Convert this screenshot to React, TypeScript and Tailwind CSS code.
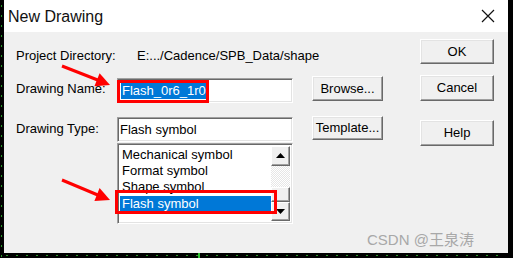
import React from 'react';

const font = { fontFamily: '"Liberation Sans", Arial, sans-serif' };

// classic raised 3D button
function Btn({ label, className = '' }: { label: string; className?: string }) {
  return (
    <div
      className={`flex items-center justify-center bg-[#f0f0f0] border border-t-white border-l-white border-r-[#696969] border-b-[#696969] shadow-[inset_-1px_-1px_0_#a0a0a0,inset_1px_1px_0_#e3e3e3] text-[13px] text-black ${className}`}
    >
      {label}
    </div>
  );
}

function Field({ children }: { children?: React.ReactNode }) {
  return (
    <div className="h-[25px] w-[176px] shrink-0 bg-white border border-t-[#a0a0a0] border-l-[#a0a0a0] border-r-white border-b-white shadow-[inset_1px_1px_0_#696969,inset_-1px_-1px_0_#e3e3e3] flex items-center pl-[2px] text-[13px] text-black">
      {children}
    </div>
  );
}

function ScrollBtn({ up, className = '' }: { up?: boolean; className?: string }) {
  return (
    <div
      className={`flex items-center justify-center bg-[#f0f0f0] border border-t-white border-l-white border-r-[#696969] border-b-[#696969] shadow-[inset_-1px_-1px_0_#a0a0a0] ${className}`}
    >
      <svg width="9" height="5" viewBox="0 0 9 5">
        {up ? <polygon points="4.5,0 9,5 0,5" fill="#000" /> : <polygon points="0,0 9,0 4.5,5" fill="#000" />}
      </svg>
    </div>
  );
}

export default function App() {
  const items = ['Mechanical symbol', 'Format symbol', 'Shape symbol'];

  return (
    <div className="relative w-[513px] h-[258px] bg-black overflow-hidden" style={font}>
      <div className="flex w-full h-full">
        {/* green dotted strip on the left */}
        <div className="w-[4px] h-full shrink-0" />
        <div className="flex flex-col w-[504px] h-[253px] shrink-0">
          {/* Title bar */}
          <div className="h-[32px] bg-white flex items-center justify-between pl-[4px] pr-[13px]">
            <span className="text-[16px] text-[#111] mt-[1px]">New Drawing</span>
            <svg width="14" height="14" viewBox="0 0 14 14" className="mb-[1px]">
              <path d="M1 1 L13 13 M13 1 L1 13" stroke="#111" strokeWidth="1.2" />
            </svg>
          </div>

          {/* Body */}
          <div className="flex-1 bg-[#f0f0f0] flex pl-[12px] text-[13px] text-black">
            {/* labels + fields */}
            <div className="flex flex-col w-[277px] shrink-0">
              <div className="mt-[15px] h-[17px] flex items-center whitespace-nowrap">
                <span className="w-[121px] shrink-0">Project Directory:</span>
                <span className="shrink-0">E:.../Cadence/SPB_Data/shape</span>
              </div>
              <div className="mt-[14px] flex items-center">
                <span className="w-[101px] shrink-0 whitespace-nowrap -mt-[4px]">Drawing Name:</span>
                <Field>
                  <span className="bg-[#0078d7] text-white px-[1px] leading-[17px] ml-[1px]">Flash_0r6_1r0</span>
                </Field>
              </div>
              <div className="mt-[14px] flex items-center">
                <span className="w-[101px] shrink-0 whitespace-nowrap -mt-[2px]">Drawing Type:</span>
                <Field>Flash symbol</Field>
              </div>
              <div className="mt-[1px] ml-[101px] relative w-[176px] h-[81px] bg-white border border-t-[#a0a0a0] border-l-[#a0a0a0] border-r-white border-b-white shadow-[inset_1px_1px_0_#696969,inset_-1px_-1px_0_#e3e3e3] flex p-[2px]">
                <div className="flex-1 flex flex-col pt-[1px]">
                  {items.map((t) => (
                    <div key={t} className="h-[16px] leading-[16px] pl-[2px]">
                      {t}
                    </div>
                  ))}
                  <div className="h-[16px] leading-[16px] pl-[2px] bg-[#0078d7] text-white mt-[1px]">Flash symbol</div>
                </div>
                <div className="w-[19px] flex flex-col">
                  <ScrollBtn up className="h-[20px]" />
                  <div className="h-[22px] bg-[repeating-conic-gradient(#ffffff_0_25%,#e6e6e6_0_50%)] bg-[length:2px_2px]" />
                  <div className="h-[15px] bg-[#f0f0f0] border border-t-white border-l-white border-r-[#696969] border-b-[#696969] shadow-[inset_-1px_-1px_0_#a0a0a0]" />
                  <ScrollBtn className="h-[19px]" />
                </div>
                {/* red highlight around selected item */}
                <div className="absolute left-[-3px] top-[46px] w-[162px] h-[24px] border-[3px] border-[#ff0000]" />
              </div>
            </div>

            {/* middle button column */}
            <div className="flex flex-col ml-[19px] w-[71px] shrink-0">
              <Btn label="Browse..." className="mt-[44px] h-[25px]" />
              <Btn label="Template..." className="mt-[15px] h-[24px]" />
            </div>

            {/* right button column */}
            <div className="flex flex-col ml-[37px] w-[74px] shrink-0">
              <Btn label="OK" className="mt-[7px] h-[25px]" />
              <Btn label="Cancel" className="mt-[11px] h-[26px]" />
              <Btn label="Help" className="mt-[19px] h-[26px]" />
            </div>
          </div>
        </div>
      </div>

      {/* red box around drawing name */}
      <div className="absolute left-[117px] top-[80px] w-[92px] h-[23px] border-[3px] border-[#ff0000]" />

      {/* red arrows */}
      <svg className="absolute left-0 top-0" width="513" height="258" viewBox="0 0 513 258">
        <line x1="62" y1="66" x2="99" y2="80.5" stroke="#ff0000" strokeWidth="3" />
        <polygon points="110,85 94.4,86.3 99.6,73.3" fill="#ff0000" />
        <line x1="62" y1="180" x2="99" y2="195.5" stroke="#ff0000" strokeWidth="3" />
        <polygon points="110,200 94.4,201.1 99.6,188.1" fill="#ff0000" />
        {/* green dots on the edges */}
        {Array.from({ length: 26 }).map((_, i) => (
          <rect key={`l${i}`} x="1" y={5 + i * 10} width="1" height="2" fill="#2a9a2a" />
        ))}
        {Array.from({ length: 50 }).map((_, i) => (
          <rect key={`b${i}`} x={6 + i * 10} y="255" width="2" height="1" fill="#2a9a2a" />
        ))}
        <rect x="198" y="253" width="2" height="5" fill="#2fbf2f" />
      </svg>

      {/* watermark */}
      <div
        className="absolute left-[367px] top-[229px] text-[15px] text-[#a8a8a8] whitespace-nowrap"
        style={{ fontFamily: '"Liberation Sans", "Noto Sans CJK SC", sans-serif' }}
      >
        CSDN @王泉涛
      </div>
    </div>
  );
}
